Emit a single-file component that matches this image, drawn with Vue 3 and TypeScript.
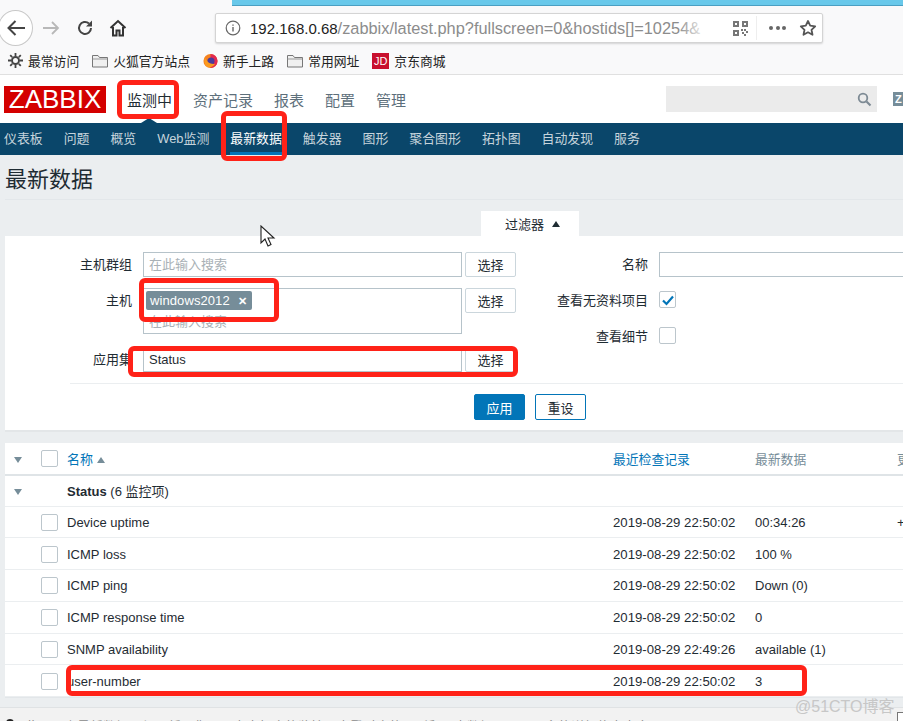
<template>
  <div class="page">
    <div class="chrome">
      <div class="sky"></div>
      <div class="toolbar">
        <div class="back">
          <svg width="20" height="20" viewBox="0 0 20 20"><path d="M19 10H2.500M9.500 3 2.500 10l7 7" fill="none" stroke="#444" stroke-width="2"/></svg>
        </div>
        <svg class="tool-icon forward" width="18" height="18" viewBox="0 0 18 18"><path d="M1 9h15M10 3l6 6-6 6" fill="none" stroke="#b8b8b8" stroke-width="1.800"/></svg>
        <svg class="tool-icon reload" width="18" height="18" viewBox="0 0 18 18"><path d="M15 9a6 6 0 1 1-2-4.500" fill="none" stroke="#444" stroke-width="2"/><path d="M16 1.500v6h-6z" fill="#444"/></svg>
        <svg class="tool-icon home" width="18" height="18" viewBox="0 0 18 18"><path d="M1.500 9 9 2l7.500 7" fill="none" stroke="#333" stroke-width="2"/><path d="M4 8v8.500h3.500v-5h3v5H14V8" fill="none" stroke="#333" stroke-width="2"/></svg>
        <div class="urlbar">
          <svg class="info-icon" width="16" height="16" viewBox="0 0 16 16"><circle cx="8" cy="8" r="6.800" fill="none" stroke="#666" stroke-width="1.200"/><path d="M8 7v4.500M8 4.500v1.300" stroke="#666" stroke-width="1.400"/></svg>
          <div class="url"><span class="url-host">192.168.0.68</span>/zabbix/latest.php?fullscreen=0&amp;hostids[]=10254&amp;</div>
          <div class="url-fade"></div>
          <svg class="qr" width="15" height="15" viewBox="0 0 15 15"><path d="M0 0h6v6H0zM9 0h6v6H9zM0 9h6v6H0zM8 8h2v2H8zM11 8h2v2h-2zM9 11h2v2H9zM13 10h2v2h-2zM11 13h2v2h-2z" fill="#777"/><path d="M2 2h2v2H2zM11 2h2v2h-2zM2 11h2v2H2z" fill="#fff"/></svg>
          <div class="url-sep"></div>
          <div class="dots"><i></i><i></i><i></i></div>
          <svg class="star" width="18" height="18" viewBox="0 0 18 18"><path d="m9 2 2.200 4.700 5 .6-3.700 3.500 1 5L9 13.300 4.500 15.800l1-5L1.800 7.300l5-.6z" fill="none" stroke="#555" stroke-width="1.800" stroke-linejoin="round"/></svg>
        </div>
      </div>
      <div class="bookmarks">
        <div class="bookmark">
          <svg width="15" height="15" viewBox="0 0 15 15"><circle cx="7.500" cy="7.500" r="3.500" fill="none" stroke="#444" stroke-width="2"/><path d="M7.500 0v3M7.500 12v3M0 7.500h3M12 7.500h3M2.200 2.200l2 2M10.800 10.800l2 2M2.200 12.800l2-2M10.800 4.200l2-2" stroke="#444" stroke-width="1.800"/></svg>
          最常访问
        </div>
        <div class="bookmark">
          <svg width="16" height="14" viewBox="0 0 16 14"><path d="M.5 13V1.500h5.500l1.500 2h8V13z" fill="#f0f0f0" stroke="#777"/><path d="M.5 5h15" stroke="#999"/></svg>
          火狐官方站点
        </div>
        <div class="bookmark">
          <svg width="15" height="16" viewBox="0 0 16 16"><circle cx="8" cy="8" r="7.500" fill="#f58220"/><path d="M8 .5A7.500 7.500 0 0 1 15.500 8 7.500 7.500 0 0 1 8 15.500" fill="#e22850"/><circle cx="8.500" cy="8" r="3.800" fill="#4a3a9a"/><path d="M2 4c2 5 6 8 11 7-2 4-7 4.500-9.500 2.500C1.500 11.500 1 7 2 4z" fill="#fb9a1e"/></svg>
          新手上路
        </div>
        <div class="bookmark">
          <svg width="16" height="14" viewBox="0 0 16 14"><path d="M.5 13V1.500h5.500l1.500 2h8V13z" fill="#f0f0f0" stroke="#777"/><path d="M.5 5h15" stroke="#999"/></svg>
          常用网址
        </div>
        <div class="bookmark">
          <span class="jd">JD</span>
          京东商城
        </div>
      </div>
    </div>

    <header class="top-nav">
      <div class="logo">ZABBIX</div>
      <nav class="main-menu">
        <a v-for="item in mainMenu" :key="item" :class="{ active: item === '监测中' }">{{ item }}</a>
      </nav>
      <div class="search">
        <svg width="15" height="15" viewBox="0 0 15 15"><circle cx="6" cy="6" r="4.300" fill="none" stroke="#7d8a94" stroke-width="1.800"/><path d="m9.500 9.500 4 4" stroke="#7d8a94" stroke-width="2.200"/></svg>
      </div>
      <div class="zbx-icon">Z</div>
    </header>

    <nav class="sub-menu">
      <a v-for="item in subMenu" :key="item" :class="{ selected: item === '最新数据' }">{{ item }}</a>
    </nav>

    <main class="content">
      <h1>最新数据</h1>

      <div class="filter-tab-row">
        <div class="filter-tab">过滤器 <span class="tab-arrow"></span></div>
      </div>

      <section class="filter">
        <div class="filter-columns">
          <div class="filter-left">
            <div class="field">
              <label>主机群组</label>
              <div class="input placeholder">在此输入搜索</div>
              <button class="btn-alt">选择</button>
            </div>
            <div class="field tall">
              <label>主机</label>
              <div class="input multi">
                <span class="tag">windows2012 <b>✕</b></span>
                <span class="placeholder">在此输入搜索</span>
              </div>
              <button class="btn-alt">选择</button>
            </div>
            <div class="field">
              <label>应用集</label>
              <div class="input">Status</div>
              <button class="btn-alt">选择</button>
            </div>
          </div>
          <div class="filter-right">
            <div class="field">
              <label>名称</label>
              <div class="input wide"></div>
            </div>
            <div class="field">
              <label>查看无资料项目</label>
              <span class="check">
                <svg width="14" height="14" viewBox="0 0 14 14"><path d="m2 7.500 3.500 3.500L12 3.500" fill="none" stroke="#0275b8" stroke-width="2.200"/></svg>
              </span>
            </div>
            <div class="field">
              <label>查看细节</label>
              <span class="check"></span>
            </div>
          </div>
        </div>
        <div class="filter-actions">
          <button class="btn-apply">应用</button>
          <button class="btn-reset">重设</button>
        </div>
      </section>

      <section class="latest">
        <div class="row head">
          <span class="col-toggle"><i class="down"></i></span>
          <span class="col-check"><span class="check"></span></span>
          <span class="col-name link">名称 <i class="up"></i></span>
          <span class="col-time link">最近检查记录</span>
          <span class="col-value muted">最新数据</span>
          <span class="col-more muted">更</span>
        </div>
        <div class="row group">
          <span class="col-toggle"><i class="down"></i></span>
          <span class="col-check"></span>
          <span class="col-name"><b>Status</b> (6 监控项)</span>
        </div>
        <div v-for="item in items" :key="item.name" class="row item">
          <span class="col-toggle"></span>
          <span class="col-check"><span class="check"></span></span>
          <span class="col-name">{{ item.name }}</span>
          <span class="col-time">{{ item.time }}</span>
          <span class="col-value">{{ item.value }}</span>
          <span class="col-more">{{ item.more }}</span>
        </div>
      </section>

      <div class="bottom-strip">
        <i class="strip-dot"></i>
        <span>此项目中最新数据已经更新，您可以点击相应的监控项查看对应的图形和历史数据，以及更多的详细信息内容</span>
        <i class="strip-box"></i>
      </div>
    </main>

    <!-- annotations drawn on the screenshot -->
    <svg class="cursor" width="16" height="24" viewBox="0 0 16 24"><path d="M1 1v17l4-4 3 7 3-1.500-3-6.500h6z" fill="#fff" stroke="#222" stroke-width="1.100"/></svg>
    <div class="mark mark-menu"></div>
    <div class="mark mark-sub"></div>
    <div class="mark mark-host"></div>
    <div class="mark mark-app"></div>
    <div class="mark mark-row"></div>
    <div class="watermark">@51CTO博客</div>
  </div>
</template>

<script setup lang="ts">
const mainMenu = ["监测中", "资产记录", "报表", "配置", "管理"];
const subMenu = ["仪表板", "问题", "概览", "Web监测", "最新数据", "触发器", "图形", "聚合图形", "拓扑图", "自动发现", "服务"];

const items = [
  { name: "Device uptime", time: "2019-08-29 22:50:02", value: "00:34:26", more: "+" },
  { name: "ICMP loss", time: "2019-08-29 22:50:02", value: "100 %", more: "" },
  { name: "ICMP ping", time: "2019-08-29 22:50:02", value: "Down (0)", more: "" },
  { name: "ICMP response time", time: "2019-08-29 22:50:02", value: "0", more: "" },
  { name: "SNMP availability", time: "2019-08-29 22:49:26", value: "available (1)", more: "" },
  { name: "user-number", time: "2019-08-29 22:50:02", value: "3", more: "" },
];
</script>

<style>
html,
body {
  margin: 0;
  overflow: hidden;
}
</style>

<style scoped>
.page {
  position: relative;
  width: 903px;
  height: 721px;
  overflow: hidden;
  background: #ebeef0;
  color: #1f2c33;
  font-family: "Liberation Sans", "Noto Sans CJK SC", sans-serif;
  font-size: 13px;
}

/* browser chrome */
.chrome {
  height: 74px;
  background: #f9f9fa;
  border-bottom: 1px solid #e0e0e0;
}
.sky {
  position: absolute;
  left: 232px;
  top: 0;
  width: 671px;
  height: 6px;
  background: #68c8ea;
  border-bottom: 1px solid #4a9fc2;
  box-sizing: border-box;
}
.toolbar {
  display: flex;
  align-items: center;
  height: 47px;
  padding-top: 9px;
  box-sizing: border-box;
}
.back {
  flex: none;
  width: 35px;
  height: 36px;
  margin-left: -2px;
  border: 1px solid #c8c8c8;
  border-radius: 50%;
  background: #fff;
  display: flex;
  align-items: center;
  justify-content: center;
  box-sizing: border-box;
}
.tool-icon {
  flex: none;
}
.forward {
  margin-left: 9px;
}
.reload {
  margin-left: 16px;
}
.home {
  margin-left: 15px;
}
.urlbar {
  position: relative;
  display: flex;
  align-items: center;
  flex: none;
  width: 608px;
  height: 30px;
  margin-left: 88px;
  background: #fff;
  border: 1px solid #d4d4d4;
  border-radius: 2px;
  box-shadow: 0 1px 2px rgba(0, 0, 0, 0.15);
  box-sizing: border-box;
}
.info-icon {
  flex: none;
  margin-left: 9px;
}
.url {
  flex: none;
  width: 475px;
  margin-left: 9px;
  overflow: hidden;
  white-space: nowrap;
  font-size: 16.350px;
  color: #8c8c8c;
}
.url-host {
  color: #222;
  font-size: 15px;
}
.url-fade {
  position: absolute;
  left: 462px;
  top: 0;
  width: 36px;
  height: 28px;
  background: linear-gradient(to right, rgba(255, 255, 255, 0), #fff 85%);
}
.qr {
  flex: none;
  margin-left: 8px;
}
.url-sep {
  flex: none;
  width: 1px;
  height: 24px;
  margin-left: 8px;
  background: #eee;
}
.dots {
  display: flex;
  gap: 2.500px;
  margin-left: 12px;
}
.dots i {
  width: 4px;
  height: 4px;
  border-radius: 50%;
  background: #666;
}
.star {
  flex: none;
  margin-left: 13px;
}
.bookmarks {
  display: flex;
  align-items: center;
  gap: 13px;
  height: 27px;
  padding-left: 8px;
  color: #222;
  font-size: 12.800px;
}
.bookmark {
  display: flex;
  align-items: center;
  gap: 5px;
  white-space: nowrap;
}
.jd {
  width: 17px;
  height: 16px;
  background: #c8102e;
  color: #fff;
  font-size: 11px;
  line-height: 16px;
  text-align: center;
}

/* zabbix header */
.top-nav {
  position: relative;
  display: flex;
  align-items: center;
  height: 48px;
  background: #fff;
}
.logo {
  flex: none;
  width: 102px;
  height: 27px;
  margin-left: 4px;
  background: #d40000;
  color: #fff;
  font-size: 26px;
  line-height: 27px;
  text-align: center;
}
.main-menu {
  flex: none;
  display: flex;
  gap: 21px;
  margin-left: 21px;
  font-size: 15px;
  color: #5d6f7b;
}
.main-menu .active {
  color: #1f2c33;
}
.search {
  flex: none;
  display: flex;
  align-items: center;
  justify-content: flex-end;
  width: 211px;
  height: 26px;
  margin-left: 260px;
  padding-right: 5px;
  box-sizing: border-box;
  background: #ebebeb;
}
.zbx-icon {
  flex: none;
  width: 20px;
  height: 14px;
  margin-left: 16px;
  background: #768d99;
  color: #fff;
  font-size: 11px;
  font-weight: bold;
  line-height: 14px;
  padding-left: 2px;
}
.top-nav::after {
  content: "";
  position: absolute;
  left: 141px;
  bottom: 0;
  border: 8px solid transparent;
  border-top: 0;
  border-bottom-color: #0a466a;
  border-bottom-width: 5px;
}
.sub-menu {
  display: flex;
  align-items: center;
  gap: 21px;
  height: 32px;
  padding-left: 4px;
  background: #0a466a;
  color: #c6d4dc;
  font-size: 12.900px;
  white-space: nowrap;
}
.sub-menu a {
  position: relative;
  line-height: 32px;
}
.sub-menu .selected {
  color: #fff;
}
.sub-menu .selected::after {
  content: "";
  position: absolute;
  left: 0;
  right: 0;
  bottom: 0;
  height: 3px;
  background: #0275b8;
}

/* content */
.content {
  padding-left: 5px;
}
h1 {
  height: 44px;
  margin: 0;
  font-size: 22px;
  font-weight: normal;
  line-height: 49px;
  color: #1f2c33;
  border-bottom: 1px solid #e3e7ea;
}
.filter-tab-row {
  display: flex;
  height: 25px;
  margin-top: 11px;
  padding-left: 476px;
}
.filter-tab {
  display: flex;
  align-items: center;
  gap: 8px;
  width: 98px;
  padding-left: 24px;
  background: #fff;
  box-sizing: border-box;
}
.tab-arrow {
  border: 4px solid transparent;
  border-top: 0;
  border-bottom: 6px solid #1f2c33;
}
.filter {
  height: 196px;
  background: #fff;
  border-bottom: 2px solid #e3e6e8;
  box-sizing: border-box;
}
.filter-columns {
  display: flex;
  height: 148px;
  margin-left: 65px;
  padding-top: 16px;
  box-sizing: border-box;
  border-bottom: 1px solid #ebeef0;
}
.filter-left {
  flex: none;
  width: 480px;
}
.field {
  display: flex;
  align-items: flex-start;
  gap: 11px;
  height: 36px;
}
.field.tall {
  height: 59px;
}
.field label {
  flex: none;
  width: 62px;
  line-height: 26px;
  text-align: right;
  white-space: nowrap;
}
.input {
  flex: none;
  width: 319px;
  height: 25px;
  padding: 0 5px;
  border: 1px solid #b6c3ca;
  box-sizing: border-box;
  line-height: 24px;
}
.input.multi {
  height: 46px;
  padding: 2px 2px 0;
  line-height: 17px;
  overflow: hidden;
}
.input .placeholder {
  display: block;
  padding-left: 3px;
  margin-top: 3px;
}
.placeholder {
  color: #a9b1b6;
}
.tag {
  display: inline-block;
  height: 19px;
  padding: 0 4px;
  line-height: 19px;
  border-radius: 2px;
  background: #768d99;
  color: #fff;
  white-space: nowrap;
  letter-spacing: 0.090px;
}
.tag b {
  margin-left: 5px;
  font-size: 11px;
}
.btn-alt {
  flex: none;
  width: 51px;
  height: 25px;
  margin-left: -8px;
  padding: 0;
  border: 1px solid #cbd6dc;
  border-radius: 2px;
  background: #fff;
  color: #1f2c33;
  font: inherit;
}
.filter-right {
  display: flex;
  flex-direction: column;
}
.filter-right .field label {
  width: 98px;
}
.input.wide {
  width: 260px;
}
.check {
  display: flex;
  align-items: center;
  justify-content: center;
  flex: none;
  width: 17px;
  height: 17px;
  border: 1px solid #bcc6cc;
  border-radius: 2px;
  background: #fff;
  box-sizing: border-box;
}
.filter-right .check {
  margin-top: 3px;
}
.filter-actions {
  display: flex;
  gap: 10px;
  margin-top: 10px;
  margin-left: 469px;
}
.btn-apply,
.btn-reset {
  width: 51px;
  height: 26px;
  padding: 0;
  border-radius: 2px;
  font: inherit;
}
.btn-apply {
  border: 1px solid #0275b8;
  background: #0275b8;
  color: #fff;
}
.btn-reset {
  border: 1px solid #0275b8;
  background: #fff;
  color: #1f2c33;
}

/* table */
.latest {
  margin-top: 11px;
  background: #fff;
  border-bottom: 1px solid #e2e6e9;
}
.row {
  display: flex;
  align-items: center;
  height: 31.800px;
  box-sizing: border-box;
  border-bottom: 1px solid #ebeef0;
  white-space: nowrap;
}
.row.item {
  padding-top: 1px;
}
.row.head {
  height: 33px;
  padding-bottom: 1px;
  border-bottom: 2px solid #dfe4e7;
}
.row.group {
  height: 30.500px;
}
.col-toggle {
  flex: none;
  width: 36px;
  padding-left: 9px;
  box-sizing: border-box;
}
.col-check {
  flex: none;
  width: 26px;
}
.col-name {
  flex: none;
  width: 546px;
}
.col-time {
  flex: none;
  width: 142px;
  font-size: 13.200px;
}
.head .col-time {
  font-size: 12.800px;
}
.col-value {
  flex: none;
  width: 142px;
}
.head .col-value {
  font-size: 12.800px;
}
.col-more {
  flex: none;
}
.link {
  color: #0275b8;
}
.muted {
  color: #768d99;
}
.down,
.up {
  display: inline-block;
  border: 4.500px solid transparent;
}
.down {
  border-top: 6px solid #768d99;
  border-bottom: 0;
}
.up {
  border-bottom: 6px solid #768d99;
  border-top: 0;
  vertical-align: 1px;
}
.bottom-strip {
  position: relative;
  height: 40px;
  margin-top: 9px;
  margin-left: -5px;
  padding: 11px 0 0 25px;
  box-sizing: border-box;
  border-top: 1px solid #dfe2e4;
  background: #f2f2f2;
  color: #8a8a8a;
  overflow: hidden;
  white-space: nowrap;
  line-height: 16px;
}
.strip-dot {
  position: absolute;
  left: 6px;
  top: 11px;
  width: 8px;
  height: 8px;
  border-radius: 50%;
  background: #222;
}
.strip-box {
  position: absolute;
  left: 897px;
  top: 4px;
  width: 14px;
  height: 14px;
  border: 1px solid #777;
  background: #fff;
}

/* overlays */
.cursor {
  position: absolute;
  left: 260px;
  top: 225px;
}
.mark {
  position: absolute;
  border: 5px solid #ff2218;
  border-radius: 6px;
  box-sizing: border-box;
}
.mark-menu {
  left: 117px;
  top: 80px;
  width: 62px;
  height: 39px;
}
.mark-sub {
  left: 221px;
  top: 111px;
  width: 66px;
  height: 50px;
}
.mark-host {
  left: 139px;
  top: 278px;
  width: 140px;
  height: 44px;
}
.mark-app {
  left: 128px;
  top: 346px;
  width: 390px;
  height: 31px;
}
.mark-row {
  left: 66px;
  top: 665px;
  width: 741px;
  height: 31px;
}
.watermark {
  position: absolute;
  left: 795px;
  top: 693px;
  color: #c7c7c7;
  font-size: 16px;
}
</style>
